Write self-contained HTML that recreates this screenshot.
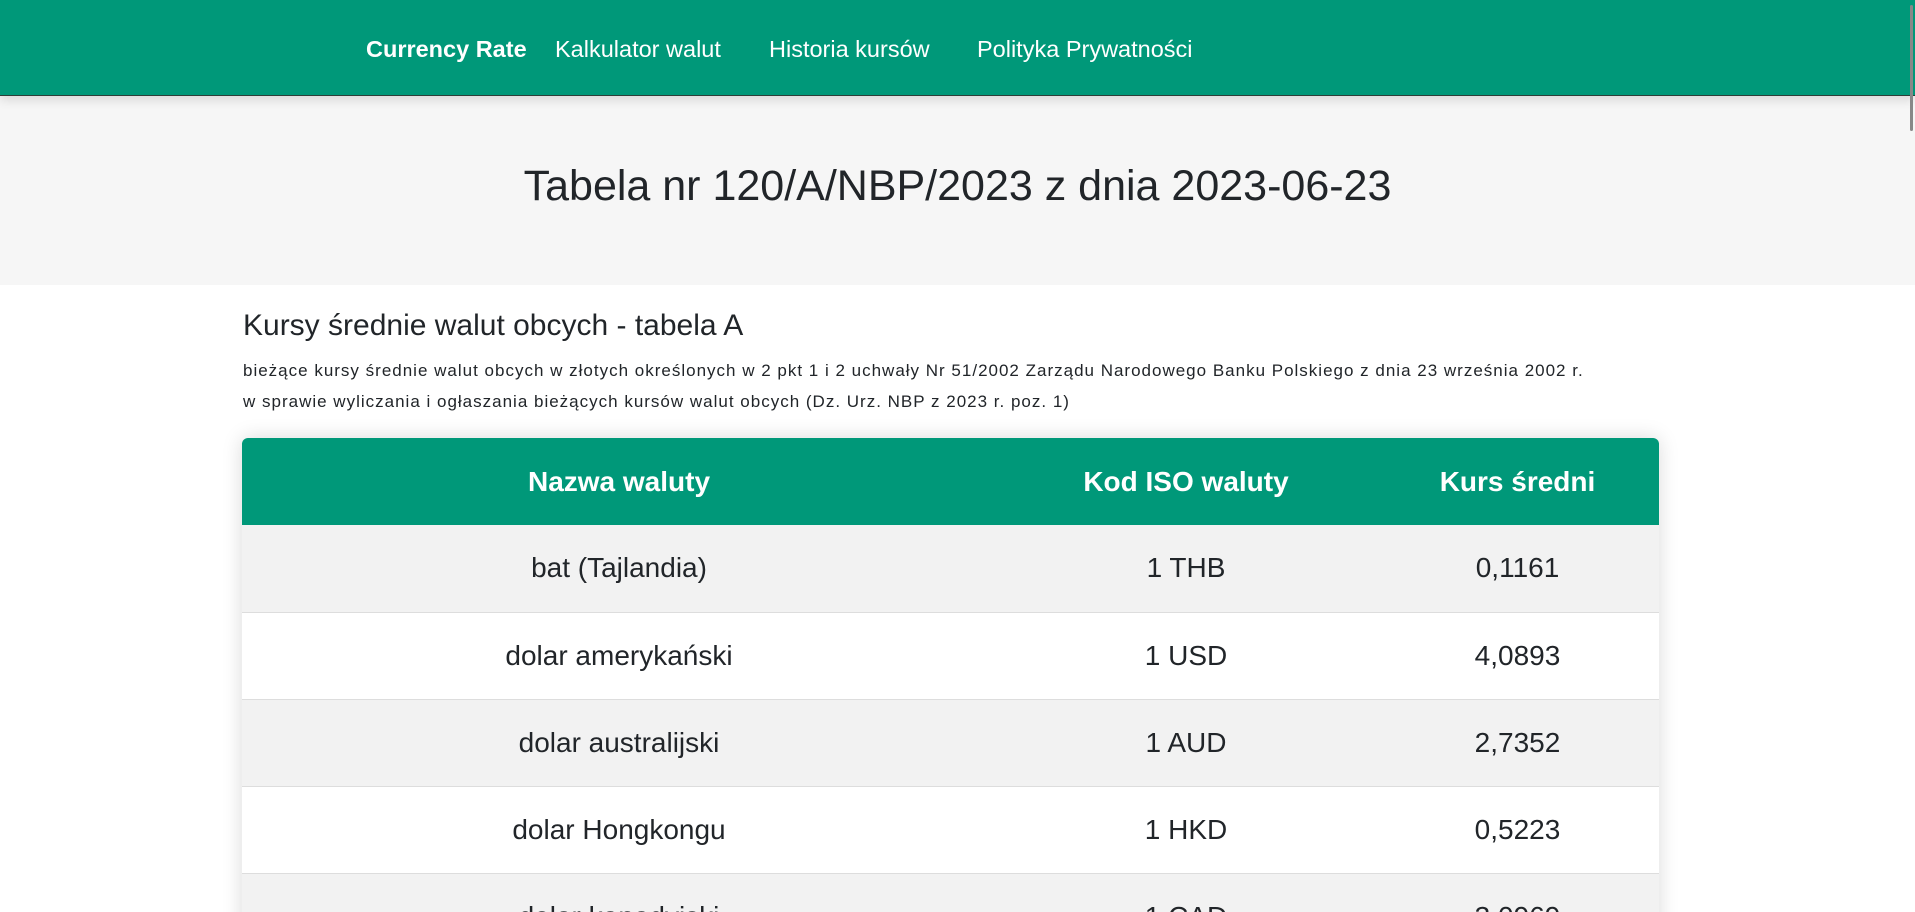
<!DOCTYPE html>
<html><head><meta charset="utf-8"><style>
*{margin:0;padding:0;box-sizing:border-box}
html,body{width:1915px;height:912px;overflow:hidden;background:#fff;font-family:"Liberation Sans",sans-serif;color:#212529}
#wrap{position:relative;width:1915px;height:912px;overflow:hidden}
nav{position:absolute;left:0;top:0;width:1915px;height:96px;background:#009879;border-bottom:1px solid #2d3e38;box-shadow:0 4px 10px rgba(0,0,0,.12);z-index:2}
nav span{position:absolute;top:36px;color:#fff;font-size:23.5px;white-space:nowrap}
.sb{position:absolute;right:2px;top:5px;width:3px;height:126px;background:#888;z-index:3;border-radius:2px}
.hero{position:absolute;top:96px;left:0;width:1915px;height:189px;background:#f6f6f6}
.hero h1{position:absolute;width:100%;top:66px;text-align:center;font-weight:normal;font-size:43px}
h2{position:absolute;left:243px;top:309px;font-weight:normal;font-size:30px}
p{position:absolute;left:243px;top:355px;font-size:17px;letter-spacing:1px;line-height:31px;white-space:nowrap}
table{position:absolute;left:242px;top:438px;width:1417px;border-collapse:collapse;box-shadow:0 0 20px rgba(0,0,0,.15);border-radius:6px 6px 0 0;overflow:hidden}
th{background:#009879;color:#fff;height:87px;font-size:28px;font-weight:bold}
td{height:87px;text-align:center;font-size:28px;border-bottom:1px solid #ddd}
tr:nth-child(odd) td{background:#f2f2f2}
</style></head><body><div id="wrap">
<nav>
<span style="left:366px;font-weight:bold">Currency Rate</span>
<span style="left:555px">Kalkulator walut</span>
<span style="left:769px">Historia kursów</span>
<span style="left:977px">Polityka Prywatności</span>
</nav>
<div class="sb"></div>
<div class="hero"><h1>Tabela nr 120/A/NBP/2023 z dnia 2023-06-23</h1></div>
<h2>Kursy średnie walut obcych - tabela A</h2>
<p>bieżące kursy średnie walut obcych w złotych określonych w 2 pkt 1 i 2 uchwały Nr 51/2002 Zarządu Narodowego Banku Polskiego z dnia 23 września 2002 r.<br>w sprawie wyliczania i ogłaszania bieżących kursów walut obcych (Dz. Urz. NBP z 2023 r. poz. 1)</p>
<table>
<colgroup><col style="width:754px"><col style="width:380px"><col style="width:283px"></colgroup>
<thead><tr><th>Nazwa waluty</th><th>Kod ISO waluty</th><th>Kurs średni</th></tr></thead>
<tbody>
<tr><td>bat (Tajlandia)</td><td>1 THB</td><td>0,1161</td></tr>
<tr><td>dolar amerykański</td><td>1 USD</td><td>4,0893</td></tr>
<tr><td>dolar australijski</td><td>1 AUD</td><td>2,7352</td></tr>
<tr><td>dolar Hongkongu</td><td>1 HKD</td><td>0,5223</td></tr>
<tr><td>dolar kanadyjski</td><td>1 CAD</td><td>3,0969</td></tr>
</tbody></table>
</div></body></html>
